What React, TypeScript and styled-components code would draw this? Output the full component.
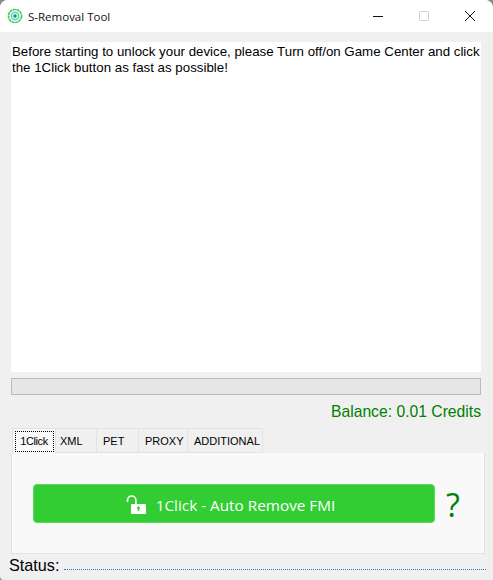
import { createGlobalStyle } from 'styled-components';
import styled from 'styled-components';

const tabs = [
  { label: '1Click', width: 44, inset: 0 },
  { label: 'XML', width: 41, inset: 4 },
  { label: 'PET', width: 42, inset: 6 },
  { label: 'PROXY', width: 49, inset: 6 },
  { label: 'ADDITIONAL', width: 75, inset: 6 },
];

const GlobalStyle = createGlobalStyle`
  html, body {
    margin: 0;
    padding: 0;
    width: 493px;
    height: 580px;
    overflow: hidden;
    background: #8a8a8a;
  }
`;

const Window = styled.div`
  width: 493px;
  height: 580px;
  display: flex;
  flex-direction: column;
  background: #f0f0f0;
  border-radius: 8px 8px 0 4px;
  overflow: hidden;
  font-family: 'Liberation Sans', Arial, sans-serif;
  color: #000;
`;

const TitleBar = styled.div`
  height: 32px;
  flex: none;
  display: flex;
  align-items: center;
  background: #fff;
  padding-left: 7px;
`;

const AppIcon = styled.svg`
  width: 16px;
  height: 16px;
  margin-right: 5px;
`;

const Title = styled.span`
  flex: 1;
  font-family: 'Open Sans', 'Noto Sans', sans-serif;
  font-size: 11.5px;
  color: #111;
`;

const WinButton = styled.div`
  width: 46px;
  height: 32px;
  display: flex;
  align-items: center;
  justify-content: center;
`;

const Body = styled.div`
  flex: 1;
  display: flex;
  flex-direction: column;
  padding: 10px 0 0 11px;
`;

const Log = styled.div`
  width: 470px;
  height: 330px;
  padding: 2px 1px;
  box-sizing: border-box;
  background: #fff;
  font-size: 13.3px;
  line-height: 16px;
  white-space: pre-line;
`;

const Progress = styled.div`
  width: 470px;
  height: 17px;
  margin-top: 6px;
  box-sizing: border-box;
  background: #e6e6e6;
  border: 1px solid #bcbcbc;
`;

const Balance = styled.div`
  width: 470px;
  margin-top: 7px;
  text-align: right;
  font-size: 15.7px;
  line-height: 19px;
  color: #008000;
`;

const TabRow = styled.div`
  display: flex;
  height: 25px;
  margin: 7px 0 0 1px;
`;

const Tab = styled.div<{ $active?: boolean; $width: number; $inset: number }>`
  width: ${(p) => p.$width}px;
  box-sizing: border-box;
  display: flex;
  align-items: center;
  justify-content: ${(p) => (p.$active ? 'center' : 'flex-start')};
  padding: ${(p) => (p.$active ? 0 : 1)}px 0 0 ${(p) => p.$inset}px;
  background: ${(p) => (p.$active ? '#f9f9f9' : '#f0f0f0')};
  border: 1px solid #e3e3e3;
  border-left-width: ${(p) => (p.$active ? 1 : 0)}px;
  border-bottom-width: ${(p) => (p.$active ? 0 : 1)}px;
  font-size: 11px;
`;

const TabFocus = styled.span`
  width: 39px;
  height: 21px;
  box-sizing: border-box;
  display: flex;
  align-items: center;
  justify-content: center;
  border: 1px dotted #000;
  letter-spacing: -0.4px;
`;

const Panel = styled.div`
  width: 474px;
  height: 101px;
  box-sizing: border-box;
  display: flex;
  align-items: flex-start;
  padding: 31px 0 0 21px;
  background: #f9f9f9;
  border: 1px solid #e3e3e3;
  border-top: 0;
`;

const RemoveButton = styled.div`
  width: 402px;
  height: 39px;
  box-sizing: border-box;
  display: flex;
  align-items: center;
  justify-content: center;
  gap: 9px;
  padding: 2px 7px 0 0;
  background: #32cd32;
  border: 1px solid #5ed85e;
  border-radius: 4px;
  color: #fff;
  font-family: 'Open Sans', 'Noto Sans', sans-serif;
  font-size: 15.3px;
`;

const Help = styled.div`
  margin-left: 8px;
  width: 20px;
  height: 39px;
  padding-top: 2px;
  box-sizing: border-box;
  display: flex;
  align-items: center;
  justify-content: center;
  color: #008000;
  font-family: 'Open Sans', 'Noto Sans', sans-serif;
  font-size: 32px;
`;

const StatusRow = styled.div`
  display: flex;
  align-items: flex-end;
  height: 20px;
  margin: 1px 0 0 -2px;
  font-size: 16.2px;
  line-height: 19px;
`;

const StatusLine = styled.div`
  width: 422px;
  margin: 0 0 5px 5px;
  border-bottom: 1px dotted #1f7fa8;
`;

const Lock = () => (
  <svg width="21" height="20" viewBox="0 0 21 20">
    <path d="M1.5 7V5.2a4.2 4.2 0 0 1 8.4 0V9" fill="none" stroke="#fff" strokeWidth="1.7" />
    <rect x="5" y="9" width="15" height="10" rx="1" fill="#fff" />
    <circle cx="12.5" cy="13" r="1.4" fill="#32cd32" />
    <rect x="11.8" y="13" width="1.4" height="3" fill="#32cd32" />
  </svg>
);

export default function App() {
  return (
    <>
      <GlobalStyle />
      <Window>
        <TitleBar>
          <AppIcon viewBox="0 0 16 16">
            <circle cx="8" cy="8" r="6.6" fill="#e4f9e8" stroke="#2bd35a" strokeWidth="1.5" strokeDasharray="3 0.6" />
            <circle cx="8" cy="8" r="3.8" fill="#d8f3f0" stroke="#47c98a" strokeWidth="1" />
            <circle cx="8" cy="8" r="1.7" fill="#2f78c4" />
          </AppIcon>
          <Title>S-Removal Tool</Title>
          <WinButton>
            <svg width="12" height="12" viewBox="0 0 12 12">
              <path d="M1 6.5h10" stroke="#111" strokeWidth="1" />
            </svg>
          </WinButton>
          <WinButton>
            <svg width="12" height="12" viewBox="0 0 12 12">
              <rect x="1.5" y="1.5" width="9" height="9" rx="1" fill="none" stroke="#cfcfcf" />
            </svg>
          </WinButton>
          <WinButton>
            <svg width="12" height="12" viewBox="0 0 12 12">
              <path d="M1 1l10 10M11 1L1 11" stroke="#111" strokeWidth="1" />
            </svg>
          </WinButton>
        </TitleBar>
        <Body>
          <Log>
            {'Before starting to unlock your device, please Turn off/on Game Center and click\nthe 1Click button as fast as possible!'}
          </Log>
          <Progress />
          <Balance>Balance: 0.01 Credits</Balance>
          <TabRow>
            {tabs.map((t, i) => (
              <Tab key={t.label} $active={i === 0} $width={t.width} $inset={t.inset}>
                {i === 0 ? <TabFocus>{t.label}</TabFocus> : t.label}
              </Tab>
            ))}
          </TabRow>
          <Panel>
            <RemoveButton>
              <Lock />
              1Click - Auto Remove FMI
            </RemoveButton>
            <Help>?</Help>
          </Panel>
          <StatusRow>
            Status:
            <StatusLine />
          </StatusRow>
        </Body>
      </Window>
    </>
  );
}
